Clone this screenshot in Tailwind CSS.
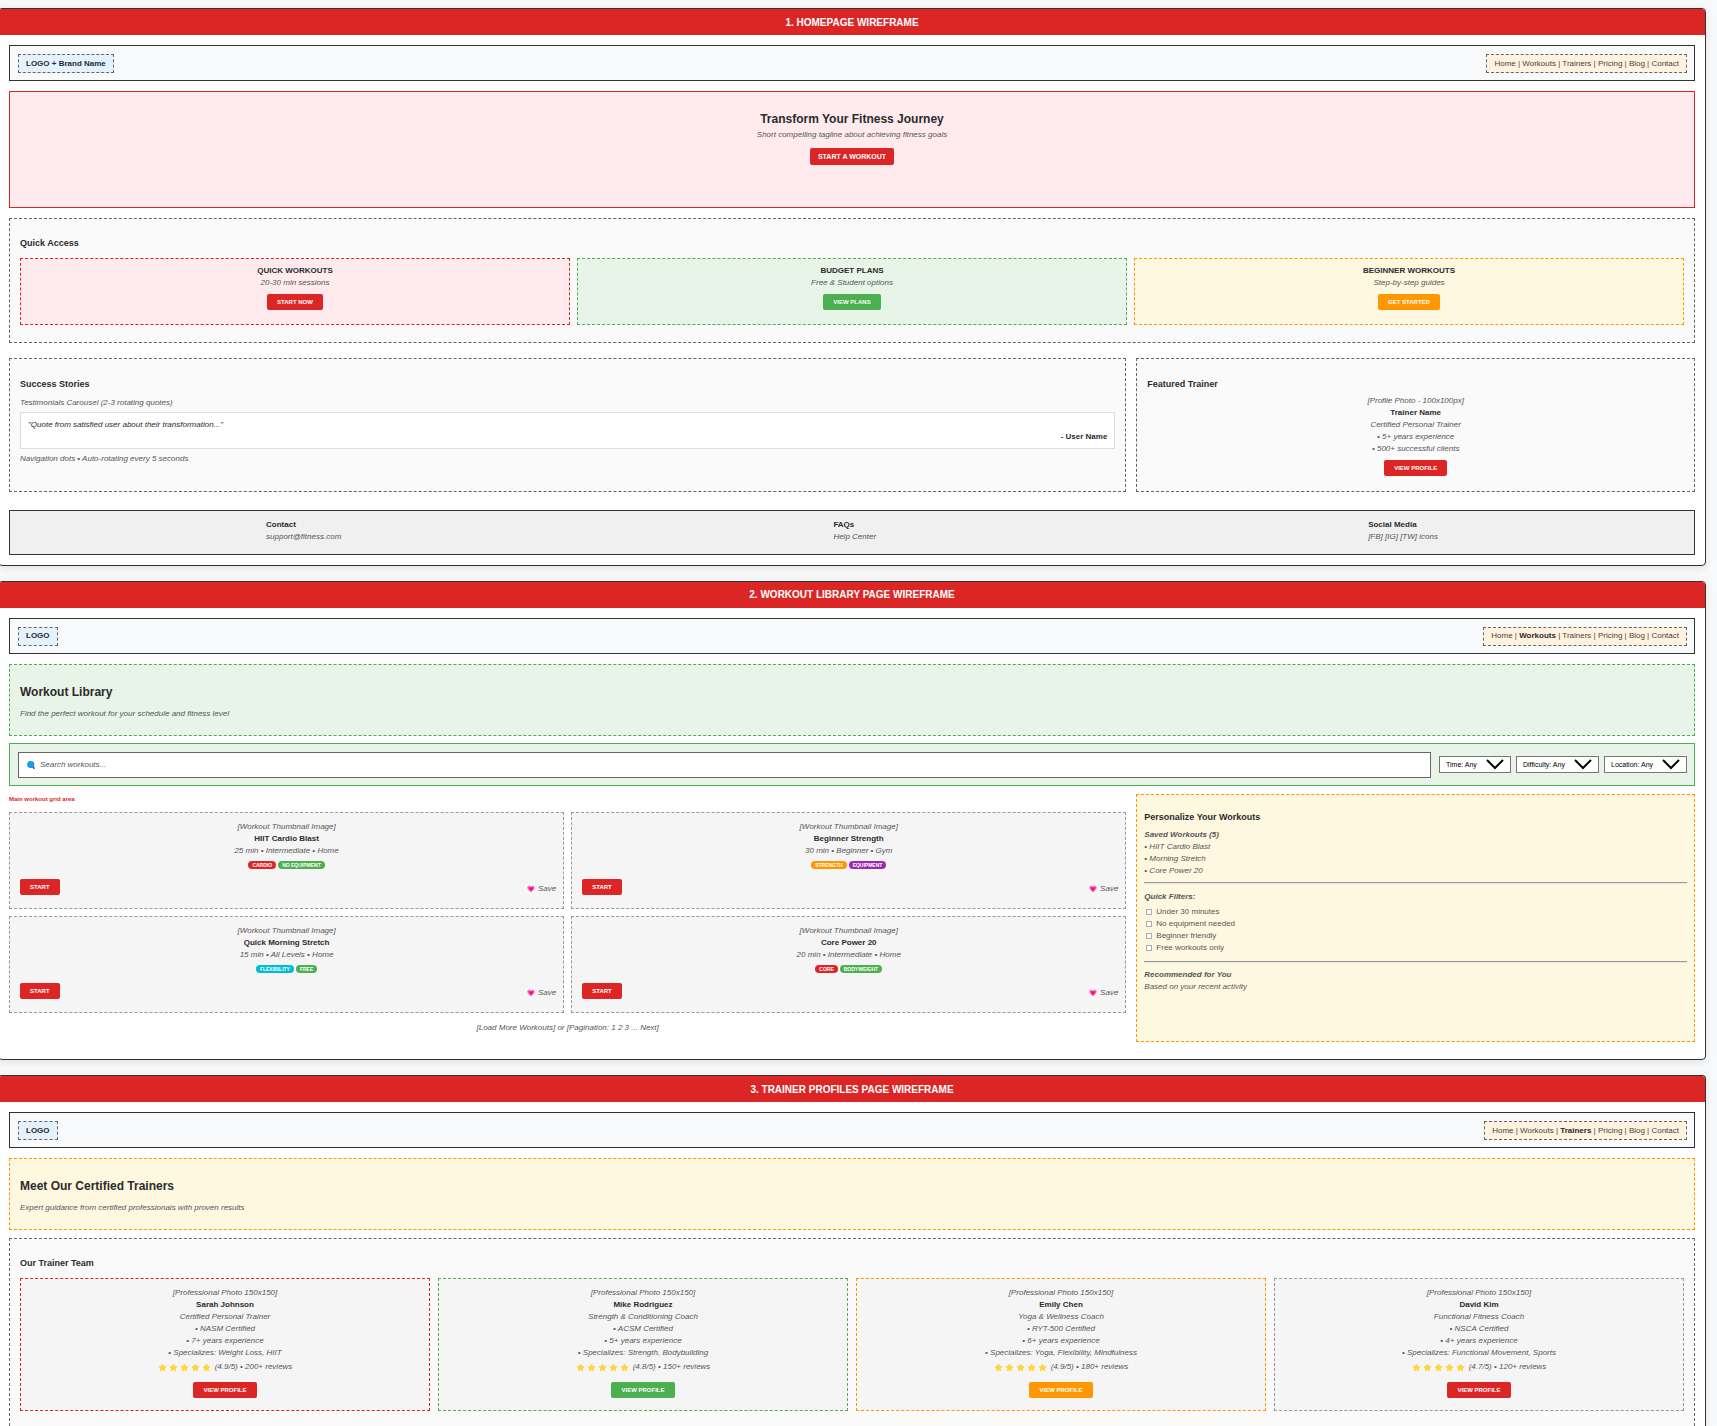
<!DOCTYPE html>
<html lang="en">
<head>
<meta charset="utf-8">
<title>Fitness Website Wireframes</title>
<script src="https://cdn.jsdelivr.net/npm/@tailwindcss/browser@4"></script>
</head>
<body class="min-h-screen flex flex-col gap-[15px] overflow-x-hidden bg-[#f8f9fa] pt-2 font-['Liberation_Sans',Arial,sans-serif] text-[8px] leading-3 text-[#2b2b2b]">
<svg class="hidden" aria-hidden="true">
  <symbol id="star" viewBox="0 0 24 24"><path fill="#ffd43b" stroke="#ffd43b" stroke-width="2" stroke-linejoin="round" d="M12 2.5l2.9 6.3 6.9.8-5.100 4.700 1.400 6.800L12 17.700l-6.100 3.400 1.400-6.800L2.200 9.600l6.900-.8z"/></symbol>
  <symbol id="heart" viewBox="0 0 24 24"><path fill="#ff6ec7" d="M12 22C5 16 1 12.500 1 7.500 1 4 3.500 2 6.500 2 9 2 11 3.300 12 5c1-1.700 3-3 5.500-3C20.500 2 23 4 23 7.500 23 12.500 19 16 12 22z"/><path fill="#f5146a" d="M12 18C8 14.500 5.500 12 5.500 9c0-2 1.200-3 2.700-3C10 6 11.300 7 12 8.500 12.700 7 14 6 15.800 6c1.500 0 2.700 1 2.700 3 0 3-2.500 5.500-6.500 9z"/></symbol>
</svg>

<section class="-ml-[2px] mr-[11px] rounded border border-[#333] bg-white shadow-[0_2px_8px_rgba(0,0,0,0.1)] overflow-hidden">
  <h2 class="h-[26px] bg-[#dc2626] text-center text-[10px] leading-[28px] font-bold text-white">1. HOMEPAGE WIREFRAME</h2>
  <div class="p-[10px]">
    <header class="flex h-9 items-center justify-between border border-[#333] bg-[#f8f9fa] pr-[7px] pl-2">
      <div class="border border-dashed border-[#666] bg-[#e3f2fd] px-[7px] pt-[3px] pb-[2px] font-bold">LOGO + Brand Name</div>
      <nav class="border border-dashed border-[#666] bg-[#fff3e0] px-[7px] pt-[3px] pb-[2px] text-[#444]"><a href="#">Home</a> | <a href="#">Workouts</a> | <a href="#">Trainers</a> | <a href="#">Pricing</a> | <a href="#">Blog</a> | <a href="#">Contact</a></nav>
    </header>
    <div class="mt-[10px] flex h-[117px] flex-col items-center border border-[#dc2626] bg-[#ffebee] pt-[19px]">
      <h1 class="text-[12px] leading-4 font-bold">Transform Your Fitness Journey</h1>
      <p class="mt-[2px] italic text-[#555]">Short compelling tagline about achieving fitness goals</p>
      <button class="mt-[7px] h-[17px] rounded-[2px] bg-[#dc2626] px-2 text-[7px] font-bold text-white">START A WORKOUT</button>
    </div>
    <div class="mt-[10px] h-[125px] border border-dashed border-[#666] bg-[#fafafa] px-[10px] pt-[18px]">
      <h3 class="text-[9px] font-bold">Quick Access</h3>
      <div class="mt-[9px] grid grid-cols-3 gap-[7px] text-center">
        <div class="h-[67px] border border-dashed border-[#dc2626] bg-[#ffebee] pt-[6px]">
          <h4 class="font-bold">QUICK WORKOUTS</h4>
          <p class="italic text-[#555]">20-30 min sessions</p>
          <button class="mt-[5px] h-4 rounded-[2px] bg-[#dc2626] px-[10px] text-[6px] font-bold text-white">START NOW</button>
        </div>
        <div class="h-[67px] border border-dashed border-[#4caf50] bg-[#e8f4e8] pt-[6px]">
          <h4 class="font-bold">BUDGET PLANS</h4>
          <p class="italic text-[#555]">Free &amp; Student options</p>
          <button class="mt-[5px] h-4 rounded-[2px] bg-[#4caf50] px-[10px] text-[6px] font-bold text-white">VIEW PLANS</button>
        </div>
        <div class="h-[67px] border border-dashed border-[#ff9800] bg-[#fff8e1] pt-[6px]">
          <h4 class="font-bold">BEGINNER WORKOUTS</h4>
          <p class="italic text-[#555]">Step-by-step guides</p>
          <button class="mt-[5px] h-4 rounded-[2px] bg-[#ff9800] px-[10px] text-[6px] font-bold text-white">GET STARTED</button>
        </div>
      </div>
    </div>
    <div class="mt-[15px] grid h-[134px] grid-cols-[2fr_1fr] gap-[10px]">
      <div class="border border-dashed border-[#666] bg-[#fafafa] px-[10px] pt-[19px]">
        <h3 class="text-[9px] font-bold">Success Stories</h3>
        <p class="mt-[7px] italic text-[#555]">Testimonials Carousel (2-3 rotating quotes)</p>
        <div class="mt-[3px] h-[37px] border border-[#ddd] bg-white px-[7px] pt-[6px]">
          <p class="italic">"Quote from satisfied user about their transformation..."</p>
          <p class="text-right font-bold">- User Name</p>
        </div>
        <p class="mt-1 italic text-[#555]">Navigation dots • Auto-rotating every 5 seconds</p>
      </div>
      <div class="border border-dashed border-[#666] bg-[#fafafa] px-[10px] pt-[19px]">
        <h3 class="text-[9px] font-bold">Featured Trainer</h3>
        <div class="mt-[5px] text-center italic text-[#555]">
          <p>[Profile Photo - 100x100px]</p>
          <p class="font-bold not-italic text-[#2b2b2b]">Trainer Name</p>
          <p>Certified Personal Trainer</p>
          <p>• 5+ years experience</p>
          <p>• 500+ successful clients</p>
          <button class="mt-[5px] h-4 rounded-[2px] bg-[#dc2626] px-[10px] text-[6px] font-bold not-italic text-white">VIEW PROFILE</button>
        </div>
      </div>
    </div>
    <footer class="mt-[18px] flex h-[45px] justify-around border border-[#333] bg-[#f0f0f0] px-[10px] pt-2">
      <div><h4 class="font-bold">Contact</h4><p class="italic text-[#555]">support@fitness.com</p></div>
      <div><h4 class="font-bold">FAQs</h4><p class="italic text-[#555]">Help Center</p></div>
      <div><h4 class="font-bold">Social Media</h4><p class="italic text-[#555]">[FB] [IG] [TW] icons</p></div>
    </footer>
  </div>
</section>

<section class="-ml-[2px] mr-[11px] rounded border border-[#333] bg-white shadow-[0_2px_8px_rgba(0,0,0,0.1)] overflow-hidden">
  <h2 class="h-[26px] bg-[#dc2626] text-center text-[10px] leading-[26px] font-bold text-white">2. WORKOUT LIBRARY PAGE WIREFRAME</h2>
  <div class="px-[10px] pt-[10px] pb-[17px]">
    <header class="flex h-9 items-center justify-between border border-[#333] bg-[#f8f9fa] pr-[7px] pl-2">
      <div class="border border-dashed border-[#666] bg-[#e3f2fd] px-[7px] pt-[2px] pb-[3px] font-bold">LOGO</div>
      <nav class="border border-dashed border-[#666] bg-[#fff3e0] px-[7px] pt-[2px] pb-[3px] text-[#444]"><a href="#">Home</a> | <a href="#" class="font-bold text-[#2b2b2b]">Workouts</a> | <a href="#">Trainers</a> | <a href="#">Pricing</a> | <a href="#">Blog</a> | <a href="#">Contact</a></nav>
    </header>
    <div class="mt-[10px] h-[72px] border border-dashed border-[#4caf50] bg-[#e8f4e8] px-[10px] pt-[19px]">
      <h1 class="text-[12px] leading-4 font-bold">Workout Library</h1>
      <p class="mt-2 italic text-[#555]">Find the perfect workout for your schedule and fitness level</p>
    </div>
    <div class="mt-[7px] flex h-[43px] items-center border border-[#4caf50] bg-[#e8f4e8] pr-[7px] pl-2">
      <label class="flex h-[26px] flex-1 items-center gap-[5px] border border-[#666] bg-white pl-2">
        <svg class="size-2" viewBox="0 0 16 16" role="img" aria-label="Search"><path d="M11 10l3 4.500" stroke="#6b3fa0" stroke-width="3.500" stroke-linecap="round"/><circle cx="7.500" cy="7" r="7" fill="#1e88e5"/><circle cx="7.500" cy="6.500" r="5" fill="#12a5f4"/></svg>
        <input type="text" placeholder="Search workouts..." class="flex-1 italic outline-none placeholder:text-[#555]">
      </label>
      <div class="ml-2 flex gap-[5px]">
        <div class="relative w-[72px]">
          <select aria-label="Time" class="h-[17px] w-full appearance-none border border-[#767676] bg-white pl-[6px] text-[7px] leading-3 text-black"><option>Time: Any</option></select>
          <svg class="pointer-events-none absolute top-[3px] right-[7px] h-[11px] w-[18px]" viewBox="0 0 18 11" fill="none" stroke="#000" stroke-width="2"><path d="M1 1l8 8 8-8"/></svg>
        </div>
        <div class="relative w-[83px]">
          <select aria-label="Difficulty" class="h-[17px] w-full appearance-none border border-[#767676] bg-white pl-[6px] text-[7px] leading-3 text-black"><option>Difficulty: Any</option></select>
          <svg class="pointer-events-none absolute top-[3px] right-[7px] h-[11px] w-[18px]" viewBox="0 0 18 11" fill="none" stroke="#000" stroke-width="2"><path d="M1 1l8 8 8-8"/></svg>
        </div>
        <div class="relative w-[83px]">
          <select aria-label="Location" class="h-[17px] w-full appearance-none border border-[#767676] bg-white pl-[6px] text-[7px] leading-3 text-black"><option>Location: Any</option></select>
          <svg class="pointer-events-none absolute top-[3px] right-[7px] h-[11px] w-[18px]" viewBox="0 0 18 11" fill="none" stroke="#000" stroke-width="2"><path d="M1 1l8 8 8-8"/></svg>
        </div>
      </div>
    </div>
    <div class="mt-2 grid h-[248px] grid-cols-[2fr_1fr] gap-[10px]">
      <main>
        <p class="h-[18px] text-[6px] leading-[10px] font-bold text-[#dc2626]">Main workout grid area</p>
        <div class="grid grid-cols-2 gap-[7px]">
          <article class="h-[97px] border border-dashed border-[#999] bg-[#f5f5f5] pt-2 text-center">
            <p class="italic text-[#555]">[Workout Thumbnail Image]</p>
            <h4 class="font-bold">HIIT Cardio Blast</h4>
            <p class="italic text-[#555]">25 min • Intermediate • Home</p>
            <div class="mt-1 flex justify-center gap-[2px] text-[5px] leading-2 font-bold text-white"><span class="rounded-full bg-[#dc2626] px-1">CARDIO</span><span class="rounded-full bg-[#4caf50] px-1">NO EQUIPMENT</span></div>
            <div class="mt-[10px] flex items-end justify-between pr-[7px] pl-[10px]"><button class="h-4 rounded-[2px] bg-[#dc2626] px-[10px] text-[6px] font-bold text-white">START</button><button class="flex items-center gap-[3px] italic text-[#555]"><svg class="size-2"><use href="#heart"/></svg>Save</button></div>
          </article>
          <article class="h-[97px] border border-dashed border-[#999] bg-[#f5f5f5] pt-2 text-center">
            <p class="italic text-[#555]">[Workout Thumbnail Image]</p>
            <h4 class="font-bold">Beginner Strength</h4>
            <p class="italic text-[#555]">30 min • Beginner • Gym</p>
            <div class="mt-1 flex justify-center gap-[2px] text-[5px] leading-2 font-bold text-white"><span class="rounded-full bg-[#ff9800] px-1">STRENGTH</span><span class="rounded-full bg-[#9c27b0] px-1">EQUIPMENT</span></div>
            <div class="mt-[10px] flex items-end justify-between pr-[7px] pl-[10px]"><button class="h-4 rounded-[2px] bg-[#dc2626] px-[10px] text-[6px] font-bold text-white">START</button><button class="flex items-center gap-[3px] italic text-[#555]"><svg class="size-2"><use href="#heart"/></svg>Save</button></div>
          </article>
          <article class="h-[97px] border border-dashed border-[#999] bg-[#f5f5f5] pt-2 text-center">
            <p class="italic text-[#555]">[Workout Thumbnail Image]</p>
            <h4 class="font-bold">Quick Morning Stretch</h4>
            <p class="italic text-[#555]">15 min • All Levels • Home</p>
            <div class="mt-1 flex justify-center gap-[2px] text-[5px] leading-2 font-bold text-white"><span class="rounded-full bg-[#00bcd4] px-1">FLEXIBILITY</span><span class="rounded-full bg-[#4caf50] px-1">FREE</span></div>
            <div class="mt-[10px] flex items-end justify-between pr-[7px] pl-[10px]"><button class="h-4 rounded-[2px] bg-[#dc2626] px-[10px] text-[6px] font-bold text-white">START</button><button class="flex items-center gap-[3px] italic text-[#555]"><svg class="size-2"><use href="#heart"/></svg>Save</button></div>
          </article>
          <article class="h-[97px] border border-dashed border-[#999] bg-[#f5f5f5] pt-2 text-center">
            <p class="italic text-[#555]">[Workout Thumbnail Image]</p>
            <h4 class="font-bold">Core Power 20</h4>
            <p class="italic text-[#555]">20 min • Intermediate • Home</p>
            <div class="mt-1 flex justify-center gap-[2px] text-[5px] leading-2 font-bold text-white"><span class="rounded-full bg-[#dc2626] px-1">CORE</span><span class="rounded-full bg-[#4caf50] px-1">BODYWEIGHT</span></div>
            <div class="mt-[10px] flex items-end justify-between pr-[7px] pl-[10px]"><button class="h-4 rounded-[2px] bg-[#dc2626] px-[10px] text-[6px] font-bold text-white">START</button><button class="flex items-center gap-[3px] italic text-[#555]"><svg class="size-2"><use href="#heart"/></svg>Save</button></div>
          </article>
        </div>
        <p class="mt-[9px] text-center italic text-[#555]">[Load More Workouts] or [Pagination: 1 2 3 ... Next]</p>
      </main>
      <aside class="border border-dashed border-[#ff9800] bg-[#fff8e1] px-[7px] pt-4">
        <h3 class="text-[9px] font-bold">Personalize Your Workouts</h3>
        <div class="mt-[6px] italic text-[#555]">
          <h4 class="font-bold">Saved Workouts (5)</h4>
          <p>• HIIT Cardio Blast</p>
          <p>• Morning Stretch</p>
          <p>• Core Power 20</p>
        </div>
        <hr class="mt-[5px] h-[2px] border-t border-b border-t-[#9a9a9a] border-b-[#e6e6ea]">
        <fieldset class="mt-[7px] text-[#555]">
          <legend class="mb-[3px] font-bold italic">Quick Filters:</legend>
          <label class="flex h-3 items-center gap-1 pl-[2px]"><input type="checkbox" class="size-[6px] appearance-none border border-[#aaa] bg-white checked:bg-[#666]">Under 30 minutes</label>
          <label class="flex h-3 items-center gap-1 pl-[2px]"><input type="checkbox" class="size-[6px] appearance-none border border-[#aaa] bg-white checked:bg-[#666]">No equipment needed</label>
          <label class="flex h-3 items-center gap-1 pl-[2px]"><input type="checkbox" class="size-[6px] appearance-none border border-[#aaa] bg-white checked:bg-[#666]">Beginner friendly</label>
          <label class="flex h-3 items-center gap-1 pl-[2px]"><input type="checkbox" class="size-[6px] appearance-none border border-[#aaa] bg-white checked:bg-[#666]">Free workouts only</label>
        </fieldset>
        <hr class="mt-[7px] h-[2px] border-t border-b border-t-[#9a9a9a] border-b-[#e6e6ea]">
        <div class="mt-[6px] italic text-[#555]">
          <h4 class="font-bold">Recommended for You</h4>
          <p>Based on your recent activity</p>
        </div>
      </aside>
    </div>
  </div>
</section>

<section class="-ml-[2px] mr-[11px] flex grow flex-col rounded-t border border-b-0 border-[#333] bg-white shadow-[0_2px_8px_rgba(0,0,0,0.1)] overflow-hidden">
  <h2 class="h-[26px] bg-[#dc2626] text-center text-[10px] leading-[28px] font-bold text-white">3. TRAINER PROFILES PAGE WIREFRAME</h2>
  <div class="flex grow flex-col px-[10px] pt-[10px]">
    <header class="flex h-9 items-center justify-between border border-[#333] bg-[#f8f9fa] pr-[7px] pl-2">
      <div class="border border-dashed border-[#666] bg-[#e3f2fd] px-[7px] pt-[3px] pb-[2px] font-bold">LOGO</div>
      <nav class="border border-dashed border-[#666] bg-[#fff3e0] px-[7px] pt-[3px] pb-[2px] text-[#444]"><a href="#">Home</a> | <a href="#">Workouts</a> | <a href="#" class="font-bold text-[#2b2b2b]">Trainers</a> | <a href="#">Pricing</a> | <a href="#">Blog</a> | <a href="#">Contact</a></nav>
    </header>
    <div class="mt-[10px] h-[72px] border border-dashed border-[#ff9800] bg-[#fff8e1] px-[10px] pt-[19px]">
      <h1 class="text-[12px] leading-4 font-bold">Meet Our Certified Trainers</h1>
      <p class="mt-2 italic text-[#555]">Expert guidance from certified professionals with proven results</p>
    </div>
    <div class="mt-2 grow border border-b-0 border-dashed border-[#666] bg-[#fafafa] px-[10px] pt-[18px]">
      <h3 class="text-[9px] font-bold">Our Trainer Team</h3>
      <div class="mt-[9px] grid grid-cols-4 gap-2 text-center italic text-[#555]">
        <article class="h-[133px] border border-dashed border-[#dc2626] bg-[#f5f5f5] pt-2">
          <p>[Professional Photo 150x150]</p>
          <h4 class="font-bold not-italic text-[#2b2b2b]">Sarah Johnson</h4>
          <p>Certified Personal Trainer</p>
          <p>• NASM Certified</p>
          <p>• 7+ years experience</p>
          <p>• Specializes: Weight Loss, HIIT</p>
          <p class="mt-[2px] flex items-center justify-center gap-[2px]"><svg class="size-[9px]"><use href="#star"/></svg><svg class="size-[9px]"><use href="#star"/></svg><svg class="size-[9px]"><use href="#star"/></svg><svg class="size-[9px]"><use href="#star"/></svg><svg class="size-[9px]"><use href="#star"/></svg><span class="pl-[2px]">(4.9/5) • 200+ reviews</span></p>
          <button class="mt-[9px] h-4 rounded-[2px] bg-[#dc2626] px-[10px] text-[6px] font-bold not-italic text-white">VIEW PROFILE</button>
        </article>
        <article class="h-[133px] border border-dashed border-[#4caf50] bg-[#f5f5f5] pt-2">
          <p>[Professional Photo 150x150]</p>
          <h4 class="font-bold not-italic text-[#2b2b2b]">Mike Rodriguez</h4>
          <p>Strength &amp; Conditioning Coach</p>
          <p>• ACSM Certified</p>
          <p>• 5+ years experience</p>
          <p>• Specializes: Strength, Bodybuilding</p>
          <p class="mt-[2px] flex items-center justify-center gap-[2px]"><svg class="size-[9px]"><use href="#star"/></svg><svg class="size-[9px]"><use href="#star"/></svg><svg class="size-[9px]"><use href="#star"/></svg><svg class="size-[9px]"><use href="#star"/></svg><svg class="size-[9px]"><use href="#star"/></svg><span class="pl-[2px]">(4.8/5) • 150+ reviews</span></p>
          <button class="mt-[9px] h-4 rounded-[2px] bg-[#4caf50] px-[10px] text-[6px] font-bold not-italic text-white">VIEW PROFILE</button>
        </article>
        <article class="h-[133px] border border-dashed border-[#ff9800] bg-[#f5f5f5] pt-2">
          <p>[Professional Photo 150x150]</p>
          <h4 class="font-bold not-italic text-[#2b2b2b]">Emily Chen</h4>
          <p>Yoga &amp; Wellness Coach</p>
          <p>• RYT-500 Certified</p>
          <p>• 6+ years experience</p>
          <p>• Specializes: Yoga, Flexibility, Mindfulness</p>
          <p class="mt-[2px] flex items-center justify-center gap-[2px]"><svg class="size-[9px]"><use href="#star"/></svg><svg class="size-[9px]"><use href="#star"/></svg><svg class="size-[9px]"><use href="#star"/></svg><svg class="size-[9px]"><use href="#star"/></svg><svg class="size-[9px]"><use href="#star"/></svg><span class="pl-[2px]">(4.9/5) • 180+ reviews</span></p>
          <button class="mt-[9px] h-4 rounded-[2px] bg-[#ff9800] px-[10px] text-[6px] font-bold not-italic text-white">VIEW PROFILE</button>
        </article>
        <article class="h-[133px] border border-dashed border-[#999] bg-[#f5f5f5] pt-2">
          <p>[Professional Photo 150x150]</p>
          <h4 class="font-bold not-italic text-[#2b2b2b]">David Kim</h4>
          <p>Functional Fitness Coach</p>
          <p>• NSCA Certified</p>
          <p>• 4+ years experience</p>
          <p>• Specializes: Functional Movement, Sports</p>
          <p class="mt-[2px] flex items-center justify-center gap-[2px]"><svg class="size-[9px]"><use href="#star"/></svg><svg class="size-[9px]"><use href="#star"/></svg><svg class="size-[9px]"><use href="#star"/></svg><svg class="size-[9px]"><use href="#star"/></svg><svg class="size-[9px]"><use href="#star"/></svg><span class="pl-[2px]">(4.7/5) • 120+ reviews</span></p>
          <button class="mt-[9px] h-4 rounded-[2px] bg-[#dc2626] px-[10px] text-[6px] font-bold not-italic text-white">VIEW PROFILE</button>
        </article>
      </div>
    </div>
  </div>
</section>
</body>
</html>
